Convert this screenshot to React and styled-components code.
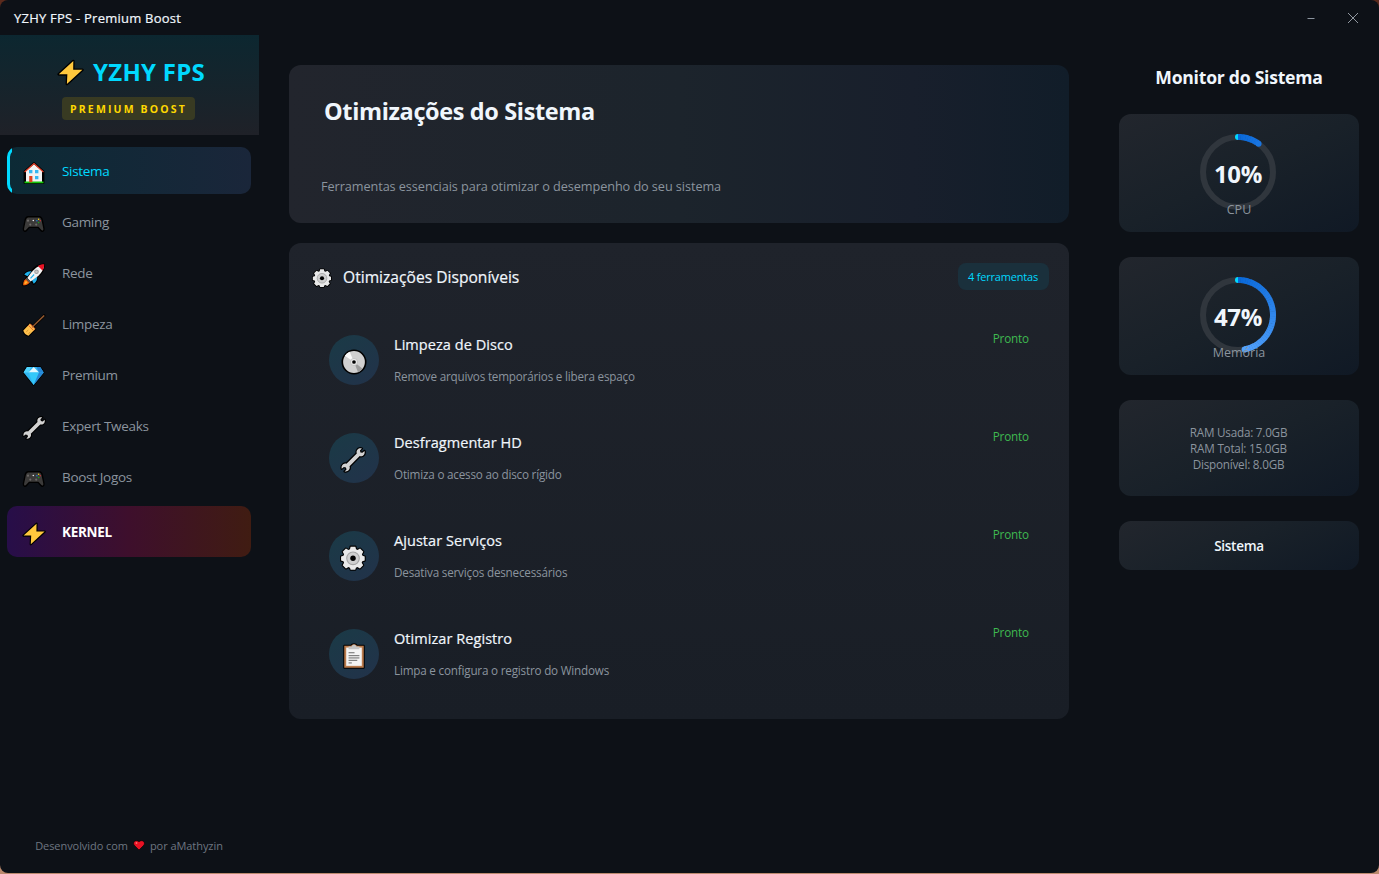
import React from "react";
import styled, { createGlobalStyle } from "styled-components";

const GlobalStyle = createGlobalStyle`
  * { box-sizing: border-box; }
  html, body { margin: 0; padding: 0; }
  body {
    background: linear-gradient(#5a2a1c 0 50%, #bb8a6e 50%);
    font-family: "Open Sans", "Noto Sans", sans-serif;
    color: #f0f6fc;
    overflow: hidden;
  }
`;

const Window = styled.div`
  width: 1379px;
  height: 873px;
  margin-bottom: 1px;
  display: flex;
  flex-direction: column;
  background: #0d1117;
  border-radius: 8px;
  overflow: hidden;
`;

const TitleBar = styled.header`
  height: 35px;
  flex: none;
  display: flex;
  align-items: center;
  justify-content: space-between;
  padding: 0 20px 0 14px;
`;

const WindowTitle = styled.span`
  font-size: 13px;
  font-weight: 500;
  line-height: 18px;
  letter-spacing: 0.23px;
  -webkit-text-stroke: 0.2px currentColor;
`;

const WindowButtons = styled.div`
  display: flex;
  align-items: center;
  gap: 32px;
  svg { display: block; }
`;

const Body = styled.div`
  flex: 1;
  min-height: 0;
  display: flex;
`;

const Sidebar = styled.aside`
  width: 259px;
  flex: none;
  display: flex;
  flex-direction: column;
`;

const Brand = styled.div`
  height: 100px;
  display: flex;
  flex-direction: column;
  align-items: center;
  padding-top: 20px;
  background: linear-gradient(#0c2730, #1f2128);
`;

const BrandName = styled.div`
  display: flex;
  align-items: center;
  gap: 9px;
  height: 32px;
  padding-left: 3px;
  color: #00d9ff;
  font-size: 24px;
  font-weight: 700;
  letter-spacing: 0.25px;
  white-space: nowrap;
  svg { margin-top: 2px; }
`;

const BrandTag = styled.div`
  width: 133px;
  height: 23px;
  margin: 10px 0 0 -2px;
  border-radius: 4px;
  background: #383a22;
  color: #ffd700;
  font-size: 10.5px;
  font-weight: 700;
  line-height: 24px;
  text-align: center;
  letter-spacing: 2.15px;
  white-space: nowrap;
`;

const Nav = styled.nav`
  display: flex;
  flex-direction: column;
  gap: 4px;
  padding: 12px 8px 0 7px;
`;

const NavItem = styled.div`
  position: relative;
  height: ${(p) => (p.$kernel ? 51 : 47)}px;
  margin-top: ${(p) => (p.$kernel ? 2 : 0)}px;
  display: flex;
  align-items: center;
  gap: 16px;
  padding-left: 15px;
  border-radius: 10px;
  background: ${(p) =>
    p.$active
      ? "linear-gradient(90deg, #0c2a35, #1a263a)"
      : p.$kernel
      ? "linear-gradient(90deg, #270e49, #3e0f2c 50%, #401c12)"
      : "transparent"};
  color: ${(p) => (p.$active ? "#00d9ff" : p.$kernel ? "#ffffff" : "#8b949e")};
  font-size: 13.5px;
  font-weight: ${(p) => (p.$kernel ? 700 : 400)};
  letter-spacing: ${(p) => (p.$kernel ? "-0.3px" : "-0.32px")};
  svg { position: relative; top: 2px; }

  &::before {
    content: "";
    display: ${(p) => (p.$active ? "block" : "none")};
    position: absolute;
    inset: 0;
    border: 3px solid #00d9ff;
    border-radius: 10px;
    clip-path: inset(0 calc(100% - 5px) 0 0);
  }
`;

const Footer = styled.div`
  margin-top: auto;
  height: 56px;
  display: flex;
  justify-content: center;
  align-items: center;
  gap: 5px;
  color: #6e7681;
  font-size: 11px;
  letter-spacing: -0.06px;
  padding-right: 1px;
`;

const Main = styled.main`
  width: 840px;
  flex: none;
  display: flex;
  flex-direction: column;
  gap: 20px;
  padding: 30px;
`;

const Hero = styled.section`
  height: 158px;
  border-radius: 12px;
  padding: 30px 32px;
  display: flex;
  flex-direction: column;
  justify-content: space-between;
  background: linear-gradient(90deg, #22252d, #1c242c 50%, #181f2c 80%, #111d29);
`;

const HeroTitle = styled.h1`
  margin: 0 0 0 3px;
  font-size: 23.5px;
  font-weight: 700;
  line-height: 32px;
  letter-spacing: -0.37px;
`;

const HeroText = styled.p`
  margin: 0 0 -3px;
  color: #8b949e;
  font-size: 12.7px;
  line-height: 20px;
  letter-spacing: -0.07px;
`;

const Panel = styled.section`
  height: 476px;
  border-radius: 12px;
  background: linear-gradient(#1f232b, #191e26);
  padding: 20px;
`;

const PanelHead = styled.div`
  display: flex;
  align-items: center;
  height: 28px;
  padding-left: 3px;
  margin-bottom: 24px;
  svg { margin-top: 1px; }
`;

const PanelTitle = styled.h2`
  margin: 0 0 0 11px;
  flex: 1;
  font-size: 15.6px;
  font-weight: 500;
  letter-spacing: 0.01px;
  -webkit-text-stroke: 0.2px currentColor;
`;

const Count = styled.span`
  width: 91px;
  height: 27px;
  margin-bottom: 1px;
  padding-right: 1px;
  border-radius: 8px;
  background: #1a303c;
  color: #00d9ff;
  text-align: center;
  font-size: 11px;
  font-weight: 500;
  line-height: 28px;
  letter-spacing: -0.2px;
  white-space: nowrap;
`;

const Tool = styled.div`
  height: 98px;
  display: flex;
  padding: 20px 20px 0;
`;

const ToolIcon = styled.div`
  width: 50px;
  height: 50px;
  border-radius: 50%;
  background: linear-gradient(145deg, #1a3a46, #22324a);
  display: flex;
  align-items: center;
  justify-content: center;
  svg { margin: 3px ${(p) => (p.$shift ? 2 : 0)}px 0 0; }
`;

const ToolText = styled.div`
  flex: 1;
  margin-left: 15px;
`;

const ToolName = styled.div`
  font-size: 14.5px;
  font-weight: 500;
  line-height: 20px;
  letter-spacing: 0.06px;
  -webkit-text-stroke: 0.2px currentColor;
`;

const ToolDesc = styled.div`
  margin-top: 12px;
  font-size: 11.7px;
  line-height: 18px;
  letter-spacing: -0.2px;
  color: #8b949e;
`;

const Status = styled.span`
  color: #3fb950;
  font-size: 11.7px;
  line-height: 18px;
  letter-spacing: -0.15px;
  margin-top: -6px;
`;

const Monitor = styled.aside`
  width: 280px;
  flex: none;
  padding: 30px 20px;
  display: flex;
  flex-direction: column;
  gap: 25px;
`;

const MonitorTitle = styled.h2`
  margin: 0;
  height: 24px;
  font-size: 17.6px;
  font-weight: 700;
  line-height: 25px;
  text-align: center;
  letter-spacing: -0.25px;
`;

const Card = styled.div`
  height: ${(p) => p.$h}px;
  border-radius: 12px;
  background: linear-gradient(155deg, #22262d, #192129 50%, #101925);
  display: flex;
  flex-direction: column;
  align-items: center;
  justify-content: center;
`;

const Gauge = styled.div`
  display: grid;
  justify-items: center;
  width: 100%;
  height: 118px;
  > * { grid-area: 1 / 1; }
  svg { margin: 19px 2px 0 0; }
`;

const GaugeValue = styled.div`
  z-index: 1;
  margin: 44px 2px 0 0;
  font-size: 24px;
  font-weight: 700;
  line-height: 32px;
  letter-spacing: -0.4px;
`;

const GaugeLabel = styled.div`
  z-index: 1;
  margin-top: 87px;
  font-size: 12.5px;
  line-height: 18px;
  color: #8b949e;
`;

const RamLine = styled.div`
  font-size: 11.7px;
  line-height: 16px;
  letter-spacing: -0.22px;
  padding-right: 1px;
  color: #8b949e;
`;

const CardLabel = styled.div`
  font-size: 13.5px;
  font-weight: 600;
  letter-spacing: -0.3px;
`;

const IconSvg = styled.svg`
  flex: none;
`;

const Svg = ({ size = 24, children }) => (
  <IconSvg width={size} height={size} viewBox="0 0 24 24" fill="none">
    {children}
  </IconSvg>
);

const Bolt = ({ size }) => (
  <Svg size={size}>
    <path d="M14.5 1.800 1.600 13.600h7.600L8.800 22.200 22.600 9.600h-8.200z" fill="#ffc83d" stroke="#000" strokeWidth="2.400" strokeLinejoin="round" paintOrder="stroke" />
  </Svg>
);

const House = () => (
  <Svg>
    <path d="M12 2 2.500 10.500V22h19V10.500z" fill="#000" stroke="#000" strokeWidth="1.800" strokeLinejoin="round" />
    <path d="M4 10 12 3.200 20 10v11H4z" fill="#f2f2f2" />
    <path d="M2.600 11 12 2.600l9.400 8.400" stroke="#e8442e" strokeWidth="1.200" />
    <path d="M7 9h3.400v3.200H7zM13 9h3.400v3.200H13zM13 15h3.400v3.200H13z" fill="#35b8f1" />
    <path d="M2.500 20.600h19v1.700h-19z" fill="#16c60c" />
    <path d="M7.200 15h3.200v6.200H7.200z" fill="#e2431e" />
  </Svg>
);

const Gamepad = () => (
  <Svg>
    <path d="M6 4.800h11.400c1.500 0 2.200 1 2.800 3L22 16.600c.3 2.600-1.800 3.400-3.300 1.700l-2.600-2.900H7.300l-2.600 2.900C3.200 20 1.100 19.200 1.400 16.600L3.200 7.800c.6-2 1.300-3 2.800-3z" fill="#3b3a39" stroke="#000" strokeWidth="1.400" />
    <circle cx="6" cy="8.700" r="1.100" fill="#6b6967" />
    <circle cx="8.300" cy="12.600" r="1.100" fill="#6b6967" />
    <circle cx="14.200" cy="12.600" r="1.100" fill="#6b6967" />
    <circle cx="11.300" cy="8.500" r=".8" fill="#e6e6e6" />
    <circle cx="16.600" cy="7.200" r=".75" fill="#f7d21c" />
    <circle cx="14.900" cy="8.800" r=".75" fill="#1686d9" />
    <circle cx="18.200" cy="8.800" r=".75" fill="#d13438" />
    <circle cx="16.600" cy="10.500" r=".75" fill="#16a616" />
  </Svg>
);

const Rocket = () => (
  <Svg>
    <path d="M22.300 1.200C17 1 12.500 4 9.500 8.200 7 7.500 4 9 2 12l3 .5-1.300 3.800C1.500 17.500 1 20 1 22.600c2.600 0 5-.8 6-2.700l3.800-1.400.7 2.800c3-2 4-5 3.700-7.500C19.500 11 22.500 6.500 22.300 1.200z" fill="#000" stroke="#000" strokeWidth="1.400" strokeLinejoin="round" />
    <path d="M2.300 11.600C4.500 8.600 7 8 9.500 8.300l-4 5zM11.800 20.800c3-2.200 3.600-4.700 3.300-7.200l-5 4z" fill="#1fb2ee" />
    <path d="M21 2.400C15 2.500 11 6.500 5.300 15l3.300 3.400C17 13 21.500 8.500 21.900 2.400z" fill="#f4f4f4" />
    <path d="M22.200 1.300c-2.300-.1-4.500.6-6.300 1.700l4.600 4.600c1.100-1.800 1.700-4 1.700-6.300z" fill="#e81224" />
    <circle cx="14.500" cy="8.800" r="2.300" fill="#9d9d9d" />
    <circle cx="14.500" cy="8.800" r="1.300" fill="#c9c9c9" />
    <path d="m8.500 15.300 3.600-3.800" stroke="#1fb2ee" strokeWidth="1.100" />
    <path d="m4.600 14.800 4.300 4.300-1.500.8L3.700 16z" fill="#5a5a5a" />
    <path d="M3.700 16.100c-2 1.500-2.600 3.500-2.500 6.200 2.700 0 4.700-.6 6.200-2.500z" fill="#f7630c" />
    <path d="M4 17.800c-1 .8-1.600 2-1.600 3.200 1.300 0 2.500-.6 3.300-1.500z" fill="#ffb52b" />
  </Svg>
);

const Broom = () => (
  <Svg>
    <path d="M22 1.700 10.500 13" stroke="#000" strokeWidth="3" strokeLinecap="round" />
    <path d="M8 9.500 13.300 15 6.500 21.700c-2.300-.4-4.700-2.600-5.200-5.200z" fill="#ffc14d" stroke="#000" strokeWidth="2" strokeLinejoin="round" paintOrder="stroke" />
    <path d="M21.800 1.900 10.500 12.700" stroke="#8e562e" strokeWidth="1.500" strokeLinecap="round" />
    <path d="m6.300 11.200 5.400 5.400M8.200 9.800l4.800 5" stroke="#e8622c" strokeWidth="1" />
    <path d="m4.300 17.800 2-1.800M6.300 19.800l2-1.700" stroke="#c98a28" strokeWidth=".8" />
  </Svg>
);

const Gem = () => (
  <Svg>
    <path d="M5 2h13.200l3.500 5.400L11.600 20 1.600 7.400z" fill="#30b5f0" stroke="#000" strokeWidth="1.600" strokeLinejoin="round" paintOrder="stroke" />
    <path d="M5 2 1.600 7.400h5.200L9 2z" fill="#50d5ff" />
    <path d="M14.500 2 17 7.400h4.700L18.200 2z" fill="#2586d4" />
    <path d="M11.700 2 6.500 7.400H17z" fill="#e3f8ff" />
    <path d="M6.500 7.400H17L11.600 20z" fill="#33c8fa" />
    <path d="M17 7.400h4.700L11.600 20z" fill="#2787d6" />
  </Svg>
);

const Wrench = ({ size }) => (
  <Svg size={size}>
    <path
      d="M20.200 1.400c-1.600-.5-3.700 0-4.500 1.700-.5 1-.5 1.900-.2 2.800L6 15.400c-1-.3-2.200-.1-3.100.6-1.300 1-1.700 2.500-1.300 4l2-1.600 1.900.5.5 1.900-1.700 1.700c1.500.4 3-.1 4-1.400.8-1 .9-2.200.5-3.300l9.400-9.400c1 .3 2 .2 3-.4 1.500-1 1.900-2.700 1.400-4.300l-1.900 1.700-1.800-.4-.5-1.800z"
      fill="#d2d2d2" stroke="#000" strokeWidth="2.200" strokeLinejoin="round" paintOrder="stroke"
    />
  </Svg>
);

const Gear = ({ size }) => (
  <Svg size={size}>
    <path
      d="M9.800 1.500h4.400l.6 2.500 1.400.6 2.300-1.300 3 3-1.300 2.300.6 1.400 2 .6v3.800l-2.200.6-.6 1.400 1.400 2.300-3 3-2.300-1.300-1.400.6-.6 1.800H9.800L9.200 21l-1.400-.6-2.300 1.300-3-3 1.300-2.300-.6-1.400-2.200-.6v-3.800l2.200-.6.6-1.400-1.300-2.300 3-3 2.300 1.300L9.200 4z"
      fill="#e9e9e9" stroke="#000" strokeWidth="2" strokeLinejoin="round" paintOrder="stroke"
    />
    <circle cx="12" cy="12.300" r="5.800" fill="#cfcfcf" stroke="#a5a5a5" strokeWidth="1" />
    <circle cx="12" cy="12.300" r="2.500" fill="#000" />
  </Svg>
);

const Disc = ({ size }) => (
  <Svg size={size}>
    <circle cx="12" cy="12" r="10.800" fill="#d0d0d0" stroke="#000" strokeWidth="1.500" />
    <path d="M12 12 3.500 6.300A10.300 10.300 0 0 1 8 2.500z" fill="#fafafa" />
    <path d="m12 12 8 6.300a10.300 10.300 0 0 1-4.300 3.100z" fill="#9c9c9c" />
    <circle cx="12" cy="12" r="3.300" fill="#ececec" stroke="#b5b5b5" strokeWidth=".6" />
    <circle cx="12" cy="12" r="1.700" fill="#000" />
  </Svg>
);

const Clipboard = ({ size }) => (
  <Svg size={size}>
    <path d="M3 2.500h6.500C10 .6 14 .6 14.500 2.500H21v20.300H3z" fill="#b97a4b" stroke="#000" strokeWidth="1.800" strokeLinejoin="round" paintOrder="stroke" />
    <path d="M4.800 4.200h14.400v16.900H4.800z" fill="#f4f4f4" />
    <path d="M7 3.200h2.800c.4-2.200 4-2.200 4.400 0H17v2.600H7z" fill="#c4c4c4" />
    <path d="M7 9h5.500M7 11.700h10M7 13.800h10M7 16h8M7 18.400h3" stroke="#666" strokeWidth=".9" />
  </Svg>
);

const Heart = () => (
  <svg width="12" height="12" viewBox="0 0 12 12">
    <path d="M6 11 1 6C-.7 3.500 2.600-.1 6 2.800c3.400-2.900 6.700.7 5 3.200z" fill="#e81224" stroke="#000" strokeWidth=".6" />
    <circle cx="3.500" cy="4" r=".9" fill="#ff6b6b" />
  </svg>
);

const mix = (t) => {
  const a = [9, 105, 218];
  const b = [88, 166, 255];
  return `rgb(${a.map((v, i) => Math.round(v + (b[i] - v) * t)).join(",")})`;
};

function Ring({ value }) {
  const at = (deg, r = 35) => {
    const a = (deg * Math.PI) / 180;
    return [39 + r * Math.sin(a), 39 - r * Math.cos(a)];
  };
  const end = value * 3.6;
  const step = 4;
  const arcs = [];
  for (let d = 0; d < end; d += step) {
    const [x1, y1] = at(d);
    const [x2, y2] = at(Math.min(end, d + step + 0.6));
    arcs.push(<path key={d} d={`M${x1} ${y1}A35 35 0 0 1 ${x2} ${y2}`} stroke={mix(d / 180)} strokeWidth="6" />);
  }
  const [ex, ey] = at(end);
  return (
    <svg width="78" height="78" viewBox="0 0 78 78" fill="none">
      <circle cx="39" cy="39" r="35" stroke="#30363d" strokeWidth="6" />
      <path d="M39 1a3 3 0 0 0 0 6z" fill="#00d9ff" />
      {arcs}
      <circle cx={ex} cy={ey} r="3" fill={mix(end / 180)} />
    </svg>
  );
}

const navItems = [
  ["Sistema", House],
  ["Gaming", Gamepad],
  ["Rede", Rocket],
  ["Limpeza", Broom],
  ["Premium", Gem],
  ["Expert Tweaks", Wrench],
  ["Boost Jogos", Gamepad],
  ["KERNEL", Bolt],
];

const tools = [
  ["Limpeza de Disco", "Remove arquivos temporários e libera espaço", Disc],
  ["Desfragmentar HD", "Otimiza o acesso ao disco rígido", Wrench],
  ["Ajustar Serviços", "Desativa serviços desnecessários", Gear],
  ["Otimizar Registro", "Limpa e configura o registro do Windows", Clipboard],
];

const gauges = [
  ["CPU", 10],
  ["Memória", 47],
];

export default function App() {
  return (
    <>
      <GlobalStyle />
      <Window>
        <TitleBar>
          <WindowTitle>YZHY FPS - Premium Boost</WindowTitle>
          <WindowButtons>
            <svg width="8" height="12" viewBox="0 0 8 12">
              <path d="M.5 6.500h7" stroke="#8b949e" />
            </svg>
            <svg width="12" height="12" viewBox="0 0 12 12">
              <path d="m1 1 10 10M11 1 1 11" stroke="#a0a8b0" strokeWidth=".9" />
            </svg>
          </WindowButtons>
        </TitleBar>
        <Body>
          <Sidebar>
            <Brand>
              <BrandName>
                <Bolt size={27} />
                YZHY FPS
              </BrandName>
              <BrandTag>PREMIUM BOOST</BrandTag>
            </Brand>
            <Nav>
              {navItems.map(([label, Icon]) => (
                <NavItem key={label} $active={label === "Sistema"} $kernel={label === "KERNEL"}>
                  <Icon />
                  {label}
                </NavItem>
              ))}
            </Nav>
            <Footer>
              <span>Desenvolvido com</span>
              <Heart />
              <span>por aMathyzin</span>
            </Footer>
          </Sidebar>
          <Main>
            <Hero>
              <HeroTitle>Otimizações do Sistema</HeroTitle>
              <HeroText>Ferramentas essenciais para otimizar o desempenho do seu sistema</HeroText>
            </Hero>
            <Panel>
              <PanelHead>
                <Gear size={20} />
                <PanelTitle>Otimizações Disponíveis</PanelTitle>
                <Count>4 ferramentas</Count>
              </PanelHead>
              {tools.map(([name, desc, Icon]) => (
                <Tool key={name}>
                  <ToolIcon $shift={Icon === Gear || Icon === Wrench}>
                    <Icon size={26} />
                  </ToolIcon>
                  <ToolText>
                    <ToolName>{name}</ToolName>
                    <ToolDesc>{desc}</ToolDesc>
                  </ToolText>
                  <Status>Pronto</Status>
                </Tool>
              ))}
            </Panel>
          </Main>
          <Monitor>
            <MonitorTitle>Monitor do Sistema</MonitorTitle>
            {gauges.map(([label, value]) => (
              <Card key={label} $h={118}>
                <Gauge>
                  <Ring value={value} />
                  <GaugeValue>{value}%</GaugeValue>
                  <GaugeLabel>{label}</GaugeLabel>
                </Gauge>
              </Card>
            ))}
            <Card $h={96}>
              <RamLine>RAM Usada: 7.0GB</RamLine>
              <RamLine>RAM Total: 15.0GB</RamLine>
              <RamLine>Disponível: 8.0GB</RamLine>
            </Card>
            <Card $h={49}>
              <CardLabel>Sistema</CardLabel>
            </Card>
          </Monitor>
        </Body>
      </Window>
    </>
  );
}
